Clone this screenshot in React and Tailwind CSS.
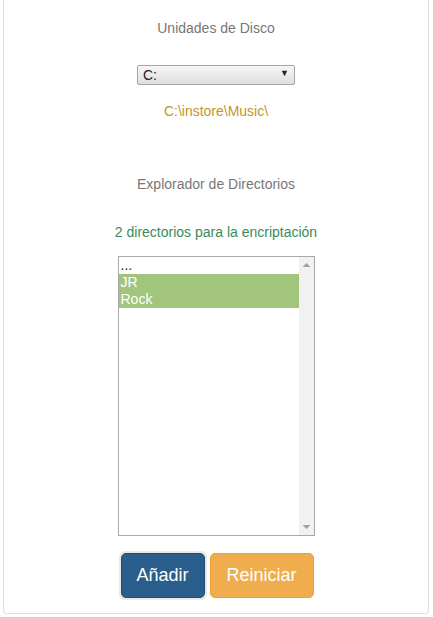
import { useState } from 'react';

const DIRS = [
  { name: '...', selected: false },
  { name: 'JR', selected: true },
  { name: 'Rock', selected: true },
];

function ListBox() {
  return (
    <div className="mt-[14px] flex h-[280px] w-[197px] border border-[#a9a9a9] bg-white">
      <div className="flex-1 text-[14px] leading-[17px]">
        {DIRS.map(d => (
          <div
            key={d.name}
            className={d.selected ? 'bg-[#a1c57c] pl-[2px] text-white' : 'pl-[2px] text-[#222]'}
          >
            {d.name}
          </div>
        ))}
      </div>
      {/* scrollbar */}
      <div className="flex w-[15px] flex-col justify-between bg-[#f1f1f1] py-[4px]">
        <svg width="15" height="8" viewBox="0 0 15 8">
          <path d="M3.5 6 L7.5 2 L11.5 6 Z" fill="#a3a3a3" />
        </svg>
        <svg width="15" height="8" viewBox="0 0 15 8">
          <path d="M3.5 2 L7.5 6 L11.5 2 Z" fill="#a3a3a3" />
        </svg>
      </div>
    </div>
  );
}

export default function App() {
  const [drive, setDrive] = useState('C:');

  return (
    <div className="min-h-[617px] bg-white font-['Liberation_Sans',Arial,sans-serif]">
      <div className="mx-[3px] flex w-[426px] flex-col items-center rounded-b-[4px] border-x border-b border-[#dddddd] pb-[13px] pt-[18px]">
        <p className="text-[14px] leading-[20px] text-[#777]">Unidades de Disco</p>

        <div className="relative mt-[25px]">
          <select
            value={drive}
            onChange={e => setDrive(e.target.value)}
            className="h-[20px] w-[158px] appearance-none rounded-[2px] border border-[#a6a6a6] bg-gradient-to-b from-[#f6f6f6] to-[#dedede] pl-[5px] text-[14px] leading-[18px] text-[#222] outline-none"
          >
            <option>C:</option>
            <option>D:</option>
          </select>
          <span className="pointer-events-none absolute right-[6px] top-[3px] text-[9px] leading-[14px] text-[#222]">▼</span>
        </div>

        <p className="mt-[14px] text-[14px] leading-[20px] text-[#c3952b]">C:\instore\Music\</p>

        <p className="mt-[53px] text-[14px] leading-[20px] text-[#777]">Explorador de Directorios</p>

        <p className="mt-[28px] text-[14px] leading-[20px] text-[#3b8a5c]">2 directorios para la encriptación</p>

        <ListBox />

        <div className="mt-[15px] flex items-center gap-[3px]">
          <div className="rounded-[6px] bg-[#e9e9e9] p-[2px]">
            <button className="h-[45px] w-[84px] rounded-[5px] border border-[#204d74] bg-[#2a5f8d] text-[18px] text-white">
              Añadir
            </button>
          </div>
          <button className="h-[45px] w-[104px] rounded-[5px] border border-[#eea236] bg-[#f0ad4e] text-[18px] text-white">
            Reiniciar
          </button>
        </div>
      </div>
    </div>
  );
}
